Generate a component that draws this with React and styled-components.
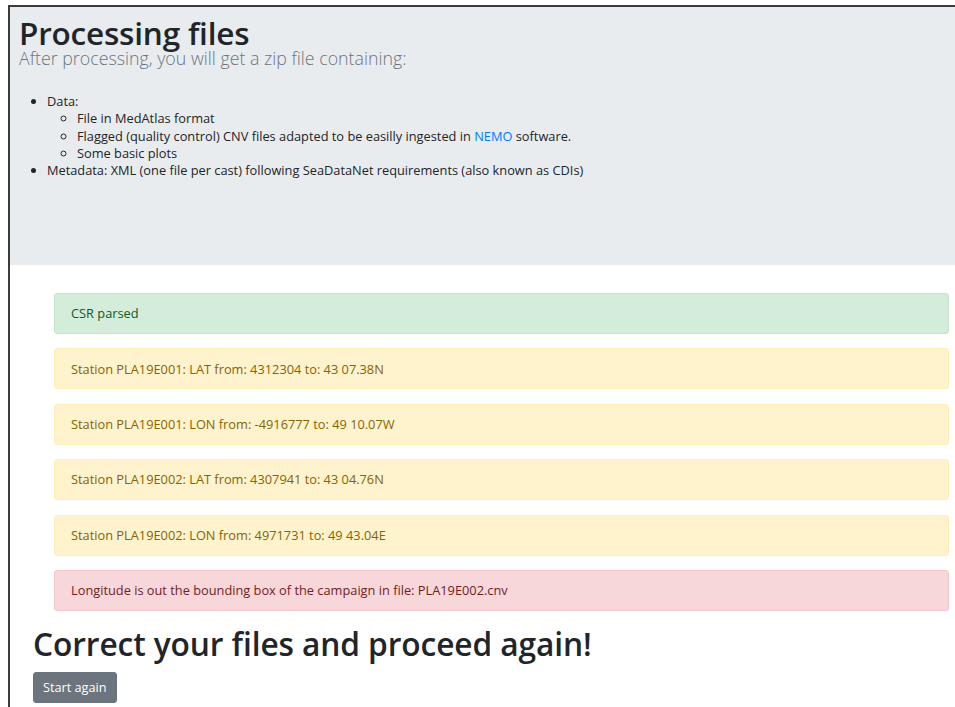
import styled, { createGlobalStyle } from "styled-components";

const GlobalStyle = createGlobalStyle`
  html, body {
    margin: 0;
    padding: 0;
    background: #fff;
  }
  body {
    font-family: "Open Sans", "Noto Sans", sans-serif;
    color: #212529;
    font-size: 12.8px;
    line-height: 1.45;
  }
`;

const Frame = styled.div`
  margin: 5px 0 0 8px;
  border-left: 2px solid #3c3c3c;
  border-top: 2px solid #3c3c3c;
  height: 700px;
  overflow: hidden;
`;

const Jumbotron = styled.section`
  background: #e9ecef;
  height: 258px;
  padding: 10px 0 0 9px;
  box-sizing: border-box;
`;

const Title = styled.h1`
  margin: 0;
  font-size: 31.5px;
  font-weight: 600;
  line-height: 32px;
  letter-spacing: -0.2px;
`;

const Lead = styled.p`
  margin: 0 0 26px;
  font-size: 17.8px;
  line-height: 18px;
  font-weight: 300;
  color: #6c757d;
`;

const List = styled.ul`
  margin: 0;
  padding-left: 28px;
  font-size: 12.8px;
  line-height: 17.3px;
  list-style: ${(p) => p.$kind || "disc"};

  & & {
    padding-left: 30px;
  }
`;

const Link = styled.a`
  color: #007bff;
  text-decoration: none;
`;

const Alerts = styled.div`
  padding: 28px 6px 0 44px;
  display: flex;
  flex-direction: column;
  gap: 14.4px;
`;

const tones = {
  success: { bg: "#d4edda", fg: "#155724", line: "#c3e6cb" },
  warning: { bg: "#fff3cd", fg: "#856404", line: "#ffeeba" },
  danger: { bg: "#f8d7da", fg: "#721c24", line: "#f5c6cb" },
};

const Alert = styled.div`
  height: 41px;
  box-sizing: border-box;
  display: flex;
  align-items: center;
  padding: 0 16px;
  border-radius: 3px;
  font-size: 12.8px;
  background: ${(p) => tones[p.$tone].bg};
  color: ${(p) => tones[p.$tone].fg};
  border: 1px solid ${(p) => tones[p.$tone].line};
`;

const Footer = styled.div`
  padding: 15px 0 0 23px;
`;

const Heading = styled.h2`
  margin: 0;
  font-size: 31.7px;
  font-weight: 600;
  line-height: 36px;
  letter-spacing: -0.1px;
`;

const Button = styled.button`
  margin-top: 10px;
  background: #6c757d;
  color: #fff;
  border: 1px solid #6c757d;
  border-radius: 3px;
  font-family: inherit;
  font-size: 12.7px;
  padding: 0 9px;
  height: 31px;
  cursor: pointer;
`;

const messages = [
  { tone: "success", text: "CSR parsed" },
  { tone: "warning", text: "Station PLA19E001: LAT from: 4312304 to: 43 07.38N" },
  { tone: "warning", text: "Station PLA19E001: LON from: -4916777 to: 49 10.07W" },
  { tone: "warning", text: "Station PLA19E002: LAT from: 4307941 to: 43 04.76N" },
  { tone: "warning", text: "Station PLA19E002: LON from: 4971731 to: 49 43.04E" },
  { tone: "danger", text: "Longitude is out the bounding box of the campaign in file: PLA19E002.cnv" },
];

export default function App() {
  return (
    <>
      <GlobalStyle />
      <Frame>
        <Jumbotron>
          <Title>Processing files</Title>
          <Lead>After processing, you will get a zip file containing:</Lead>
          <List>
            <li>
              Data:
              <List $kind="circle">
                <li>File in MedAtlas format</li>
                <li>
                  Flagged (quality control) CNV files adapted to be easilly ingested in{" "}
                  <Link href="#">NEMO</Link> software.
                </li>
                <li>Some basic plots</li>
              </List>
            </li>
            <li>Metadata: XML (one file per cast) following SeaDataNet requirements (also known as CDIs)</li>
          </List>
        </Jumbotron>
        <Alerts>
          {messages.map((m) => (
            <Alert key={m.text} $tone={m.tone}>
              {m.text}
            </Alert>
          ))}
        </Alerts>
        <Footer>
          <Heading>Correct your files and proceed again!</Heading>
          <Button>Start again</Button>
        </Footer>
      </Frame>
    </>
  );
}
